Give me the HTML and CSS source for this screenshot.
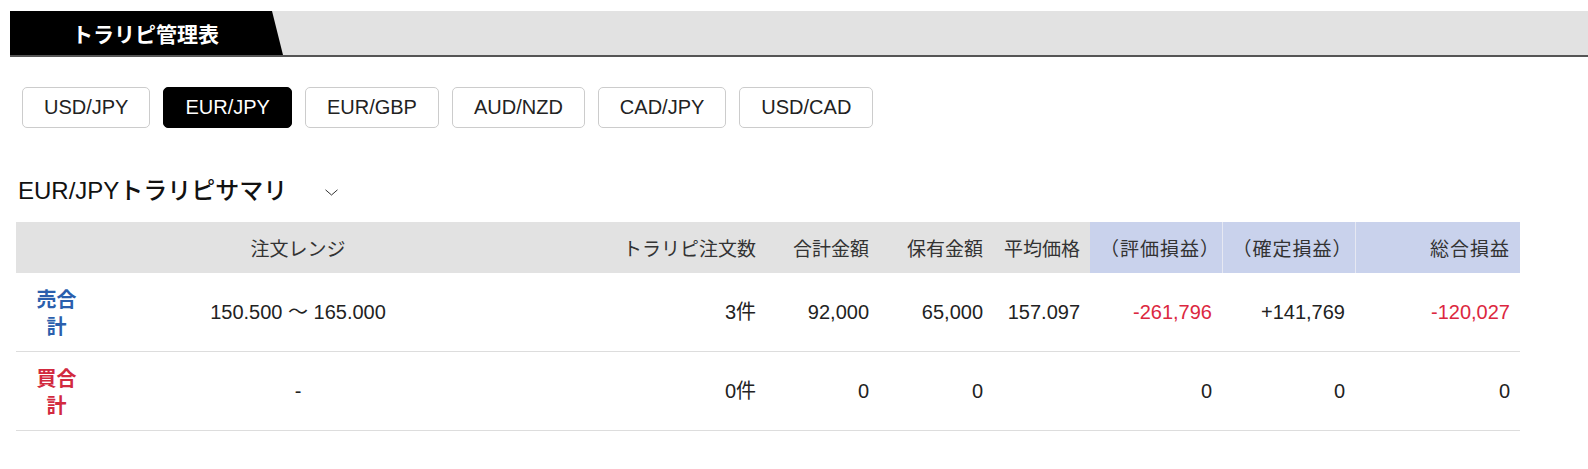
FILE: index.html
```html
<!DOCTYPE html>
<html lang="ja">
<head>
  <meta charset="UTF-8">
  <meta name="viewport" content="width=device-width, initial-scale=1.0">
  <title>トラリピ管理表</title>
  <link rel="stylesheet" href="styles.css">
</head>
<body>
  <div class="page-head">
    <div class="page-tab">トラリピ管理表</div>
  </div>

  <div class="content">
    <div class="pair-list">
      <button class="pair">USD/JPY</button>
      <button class="pair active">EUR/JPY</button>
      <button class="pair">EUR/GBP</button>
      <button class="pair">AUD/NZD</button>
      <button class="pair">CAD/JPY</button>
      <button class="pair">USD/CAD</button>
    </div>

    <h2 class="summary-title">
      <span>EUR/JPYトラリピサマリ</span>
      <svg class="chevron" width="13" height="7" viewBox="0 0 13 7"><polyline points="0.5,0.8 6.5,6 12.5,0.8" fill="none" stroke="#333" stroke-width="1"/></svg>
    </h2>

    <table class="summary">
      <colgroup>
        <col style="width: 81px">
        <col style="width: 402px">
        <col style="width: 267px">
        <col style="width: 113px">
        <col style="width: 114px">
        <col style="width: 97px">
        <col style="width: 132px">
        <col style="width: 133px">
        <col style="width: 165px">
      </colgroup>
      <thead>
        <tr>
          <th></th>
          <th class="center">注文レンジ</th>
          <th>トラリピ注文数</th>
          <th>合計金額</th>
          <th>保有金額</th>
          <th>平均価格</th>
          <th class="pl">（評価損益）</th>
          <th class="pl sep">（確定損益）</th>
          <th class="pl sep">総合損益</th>
        </tr>
      </thead>
      <tbody>
        <tr>
          <td class="label sell">売合計</td>
          <td class="center">150.500 〜 165.000</td>
          <td>3件</td>
          <td>92,000</td>
          <td>65,000</td>
          <td>157.097</td>
          <td class="minus">-261,796</td>
          <td>+141,769</td>
          <td class="minus">-120,027</td>
        </tr>
        <tr>
          <td class="label buy">買合計</td>
          <td class="center">-</td>
          <td>0件</td>
          <td>0</td>
          <td>0</td>
          <td></td>
          <td>0</td>
          <td>0</td>
          <td>0</td>
        </tr>
      </tbody>
    </table>
  </div>
</body>
</html>
```

FILE: styles.css
```css
body {
  margin: 0;
  font-family: "Liberation Sans", "Noto Sans CJK JP", sans-serif;
  color: #222222;
  background-color: #ffffff;
}
.page-head {
  margin: 11px 0 0 10px;
  height: 44px;
  background-color: #e2e2e2;
  border-bottom: 2px solid #555555;
}
.page-tab {
  width: 273px;
  height: 44px;
  box-sizing: border-box;
  padding-left: 62px;
  background-color: #000000;
  color: #ffffff;
  font-family: "Noto Sans CJK JP", sans-serif;
  font-size: 21px;
  font-weight: bold;
  line-height: 44px;
  clip-path: polygon(0 0, 262px 0, 100% 100%, 0 100%);
}
.content {
  padding: 0 16px;
}
.pair-list {
  display: flex;
  gap: 13px;
  margin: 30px 0 0 6px;
}
.pair {
  height: 41px;
  padding: 0 21px;
  border: 1px solid #cccccc;
  border-radius: 5px;
  background-color: #ffffff;
  color: #222222;
  font-family: "Liberation Sans", sans-serif;
  font-size: 20px;
}
.pair.active {
  background-color: #000000;
  border-color: #000000;
  color: #ffffff;
}
.summary-title {
  display: flex;
  align-items: center;
  gap: 38px;
  margin: 47px 0 0 2px;
  height: 32px;
  font-size: 24px;
  font-weight: 500;
  line-height: 32px;
  color: #111111;
}
.chevron {
  margin-top: 3px;
}
.summary {
  table-layout: fixed;
  width: 1504px;
  margin-top: 15px;
  border-collapse: collapse;
}
th {
  height: 51px;
  padding: 0 10px;
  background-color: #e2e2e2;
  color: #333333;
  font-size: 19px;
  font-weight: normal;
  text-align: right;
  white-space: nowrap;
}
th.pl {
  background-color: #c9d2ec;
  letter-spacing: 1px;
}
th.sep {
  border-left: 1px solid #e6e8f2;
}
td {
  padding: 12px 10px;
  border-bottom: 1px solid #dddddd;
  font-size: 20px;
  line-height: 27px;
  text-align: right;
  color: #222222;
}
.center {
  text-align: center;
}
td.label {
  padding: 12px 16px;
  text-align: center;
  font-weight: bold;
  font-family: "Noto Sans CJK JP", sans-serif;
}
.sell {
  color: #2b5fad;
}
.buy {
  color: #d22a3f;
}
.minus {
  color: #dc2740;
}
```
